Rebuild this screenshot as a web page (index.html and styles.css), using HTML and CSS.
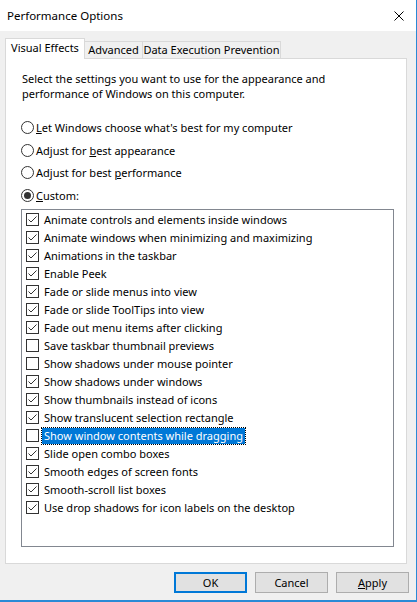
FILE: index.html
```html
<!DOCTYPE html>
<html lang="en">
<head>
    <meta charset="UTF-8">
    <title>Performance Options</title>
    <link rel="stylesheet" href="styles.css">
</head>
<body>
    <div class="window">
        <div class="titlebar">
            <span class="title">Performance Options</span>
            <span class="close">
                <svg width="10" height="10" viewBox="0 0 10 10"><path d="M0.5 0.5 L9.5 9.5 M9.5 0.5 L0.5 9.5" stroke="#000" stroke-width="1" fill="none"/></svg>
            </span>
        </div>

        <div class="tabs">
            <div class="tab active">Visual Effects</div>
            <div class="tab tab-advanced">Advanced</div>
            <div class="tab tab-dep">Data Execution Prevention</div>
        </div>

        <div class="panel">
            <p class="intro">Select the settings you want to use for the appearance and<br>performance of Windows on this computer.</p>

            <div class="radios">
                <div class="radio"><span class="circle"></span><span><u>L</u>et Windows choose what's best for my computer</span></div>
                <div class="radio"><span class="circle"></span><span>Adjust for <u>b</u>est appearance</span></div>
                <div class="radio"><span class="circle"></span><span>Adjust for best <u>p</u>erformance</span></div>
                <div class="radio selected"><span class="circle"></span><span><u>C</u>ustom:</span></div>
            </div>

            <div class="listbox">
                <div class="item checked"><span class="box"></span><span class="label">Animate controls and elements inside windows</span></div>
                <div class="item checked"><span class="box"></span><span class="label">Animate windows when minimizing and maximizing</span></div>
                <div class="item checked"><span class="box"></span><span class="label">Animations in the taskbar</span></div>
                <div class="item checked"><span class="box"></span><span class="label">Enable Peek</span></div>
                <div class="item checked"><span class="box"></span><span class="label">Fade or slide menus into view</span></div>
                <div class="item checked"><span class="box"></span><span class="label">Fade or slide ToolTips into view</span></div>
                <div class="item checked"><span class="box"></span><span class="label">Fade out menu items after clicking</span></div>
                <div class="item"><span class="box"></span><span class="label">Save taskbar thumbnail previews</span></div>
                <div class="item"><span class="box"></span><span class="label">Show shadows under mouse pointer</span></div>
                <div class="item checked"><span class="box"></span><span class="label">Show shadows under windows</span></div>
                <div class="item checked"><span class="box"></span><span class="label">Show thumbnails instead of icons</span></div>
                <div class="item checked"><span class="box"></span><span class="label">Show translucent selection rectangle</span></div>
                <div class="item focused"><span class="box"></span><span class="label">Show window contents while dragging</span></div>
                <div class="item checked"><span class="box"></span><span class="label">Slide open combo boxes</span></div>
                <div class="item checked"><span class="box"></span><span class="label">Smooth edges of screen fonts</span></div>
                <div class="item checked"><span class="box"></span><span class="label">Smooth-scroll list boxes</span></div>
                <div class="item checked"><span class="box"></span><span class="label">Use drop shadows for icon labels on the desktop</span></div>
            </div>
        </div>

        <div class="buttons">
            <button class="btn default">OK</button>
            <button class="btn">Cancel</button>
            <button class="btn"><u>A</u>pply</button>
        </div>
    </div>
</body>
</html>
```

FILE: styles.css
```css
html {
    font-family: "Noto Sans", sans-serif;
    font-size: 11px;
    color: #000000;
}
body {
    margin: 0;
    padding: 0;
}

.window {
    width: 417px;
    height: 602px;
    box-sizing: border-box;
    background-color: #f0f0f0;
    border-right: 1px solid #2a8ad6;
    border-bottom: 2px solid #2a8ad6;
}

.titlebar {
    height: 31px;
    background-color: #ffffff;
    display: flex;
    align-items: center;
    justify-content: space-between;
    padding: 0 12px 0 7px;
}
.title {
    font-size: 11.5px;
}
.close {
    display: flex;
}

.tabs {
    display: flex;
    align-items: flex-end;
    height: 20px;
    margin: 7px 0 0 5px;
}
.tab {
    box-sizing: border-box;
    height: 17px;
    line-height: 16px;
    text-align: center;
    border-top: 1px solid #d9d9d9;
    border-right: 1px solid #d9d9d9;
    background-color: #f0f0f0;
}
.tab.active {
    width: 80px;
    height: 21px;
    line-height: 18px;
    margin-bottom: -1px;
    border-left: 1px solid #d9d9d9;
    background-color: #ffffff;
    position: relative;
    z-index: 1;
}
.tab-advanced {
    width: 58px;
}
.tab-dep {
    width: 138px;
}

.panel {
    box-sizing: border-box;
    width: 402px;
    height: 506px;
    margin-left: 5px;
    border: 1px solid #d9d9d9;
    background-color: #ffffff;
    padding: 12px 0 0 15px;
}
.intro {
    margin: 0;
    line-height: 15px;
    padding-left: 1px;
}

.radios {
    margin-top: 15px;
}
.radio {
    display: flex;
    align-items: center;
    height: 22.7px;
    gap: 2px;
}
.circle {
    box-sizing: border-box;
    width: 13px;
    height: 13px;
    border: 1px solid #333333;
    border-radius: 50%;
    display: flex;
    align-items: center;
    justify-content: center;
}
.radio.selected .circle::after {
    content: "";
    width: 7px;
    height: 7px;
    border-radius: 50%;
    background-color: #333333;
}

.listbox {
    box-sizing: border-box;
    width: 373px;
    height: 338px;
    margin-top: 2px;
    border: 1px solid #828790;
    padding: 1px 0 0 4px;
}
.item {
    display: flex;
    align-items: center;
    height: 18px;
}
.box {
    box-sizing: border-box;
    width: 13px;
    height: 13px;
    border: 1px solid #333333;
    background-color: #ffffff;
    margin-right: 3px;
}
.item.checked .box {
    background-image: url("data:image/svg+xml;utf8,<svg xmlns='http://www.w3.org/2000/svg' width='11' height='11' viewBox='0 0 11 11'><path d='M1.5 5.5 L4 8 L9.5 2.5' stroke='%23333333' stroke-width='1' fill='none'/></svg>");
}
.label {
    padding: 0 2px;
    line-height: 16px;
}
.item.focused .label {
    background-color: #0078d7;
    color: #ffffff;
    outline: 1px dotted #000000;
}

.buttons {
    display: flex;
    justify-content: flex-end;
    gap: 8px;
    margin: 8px 7px 0 0;
}
.btn {
    box-sizing: border-box;
    width: 73px;
    height: 21px;
    padding: 0;
    font-family: inherit;
    font-size: 11px;
    color: #000000;
    background-color: #e1e1e1;
    border: 1px solid #adadad;
}
.btn.default {
    border: 2px solid #0078d7;
}
```
